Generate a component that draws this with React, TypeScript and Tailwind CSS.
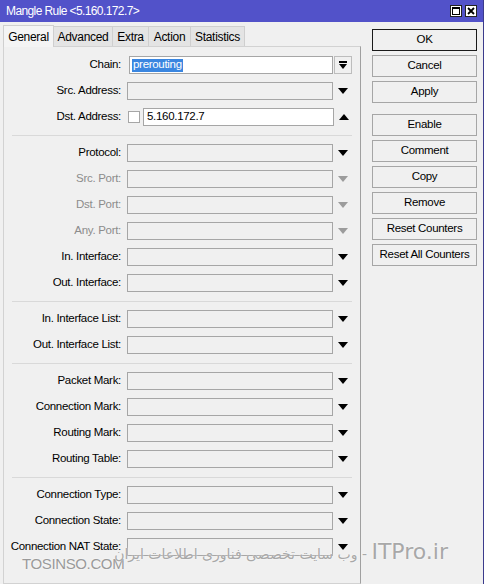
import React from "react";

type Row = { label: string; disabled?: boolean };

const sections: Row[][] = [
  [{ label: "Protocol:" }, { label: "Src. Port:", disabled: true }, { label: "Dst. Port:", disabled: true }, { label: "Any. Port:", disabled: true }, { label: "In. Interface:" }, { label: "Out. Interface:" }],
  [{ label: "In. Interface List:" }, { label: "Out. Interface List:" }],
  [{ label: "Packet Mark:" }, { label: "Connection Mark:" }, { label: "Routing Mark:" }, { label: "Routing Table:" }],
  [{ label: "Connection Type:" }, { label: "Connection State:" }, { label: "Connection NAT State:" }],
];

const buttons1 = ["Cancel", "Apply"];
const buttons2 = ["Enable", "Comment", "Copy", "Remove", "Reset Counters", "Reset All Counters"];

function Down({ gray }: { gray?: boolean }) {
  return (
    <svg width="10" height="6" viewBox="0 0 10 6">
      <path d="M0 0H10L5 6Z" fill={gray ? "#9c9c9c" : "#000"} />
    </svg>
  );
}

function Up() {
  return (
    <svg width="10" height="6" viewBox="0 0 10 6">
      <path d="M0 6H10L5 0Z" fill="#000" />
    </svg>
  );
}

function Label({ text, disabled }: { text: string; disabled?: boolean }) {
  return (
    <div className={`w-[117px] shrink-0 flex justify-end whitespace-nowrap ${disabled ? "text-[#8c8c8c]" : "text-black"}`}>
      {text}
    </div>
  );
}

function Field({ label, disabled }: Row) {
  return (
    <div className="h-[26px] flex items-center">
      <Label text={label} disabled={disabled} />
      <div className="ml-[6px] w-[206px] h-[18px] border border-[#a6a6a6] bg-[#f0f0f0]" />
      <div className="w-[20px] flex justify-center">
        <Down gray={disabled} />
      </div>
    </div>
  );
}

function Sep() {
  return <div className="h-[10px] flex items-center mx-2"><div className="h-px w-full bg-[#d9d9d9]" /></div>;
}

function Btn({ text, focus }: { text: string; focus?: boolean }) {
  return (
    <div className={`h-[22px] flex items-center justify-center bg-[#f0f0f0] border ${focus ? "border-[#1a1a1a]" : "border-[#a6a6a6]"}`}>
      {text}
    </div>
  );
}

export default function App() {
  return (
    <div className="w-[486px] h-[584px] bg-white overflow-hidden relative text-[11.5px] tracking-[-0.3px] leading-none text-black" style={{ fontFamily: '"Liberation Sans", Arial, sans-serif' }}>
      <div className="w-[484px] h-full bg-[#f0f0f0] border-r border-[#3b3b8c] flex flex-col">
        {/* title bar */}
        <div className="h-[22px] bg-[#5252c9] flex items-center pl-[6px] pr-[6px] text-white text-[12px] tracking-[-0.6px]">
          <span>Mangle Rule &lt;5.160.172.7&gt;</span>
          <div className="ml-auto flex gap-[3px]">
            <div className="w-[12px] h-[12px] bg-white border border-[#222] flex items-center justify-center">
              <div className="w-[8px] h-[8px] border border-black border-t-2" />
            </div>
            <div className="w-[12px] h-[12px] bg-white border border-[#222] flex items-center justify-center">
              <svg width="8" height="8" viewBox="0 0 8 8"><path d="M1 1L7 7M7 1L1 7" stroke="#000" strokeWidth="1.8" /></svg>
            </div>
          </div>
        </div>

        <div className="flex flex-1">
          {/* left: tabs + panel */}
          <div className="pl-[3px] pt-[2px] flex flex-col w-[361px]">
            <div className="h-[22px] flex items-end text-[12px]">
              <div className="h-[22px] w-[51px] flex items-center justify-center bg-[#f4f4f4] border border-b-0 border-[#cfcfcf] relative top-px">General</div>
              {["Advanced", "Extra", "Action", "Statistics"].map((t, i) => (
                <div key={t} className={`h-[20px] flex items-center justify-center bg-[#e4e4e4] border border-b-0 border-l-0 border-[#cfcfcf] ${["w-[59px]", "w-[36px]", "w-[42px]", "w-[54px]"][i]}`}>
                  {t}
                </div>
              ))}
            </div>
            <div className="flex-1 border border-[#d2d2d2] border-r-[#a0a0a0] pt-[5px]">
              <div className="h-[26px] flex items-center">
                <Label text="Chain:" />
                <div className="ml-[8px] w-[204px] h-[18px] border border-[#a6a6a6] bg-white flex items-center pl-[2px]">
                  <span className="bg-[#3a86e0] text-white h-[13px] flex items-center px-px">prerouting</span>
                </div>
                <div className="ml-px w-[18px] h-[18px] border border-[#bdbdbd] flex flex-col items-center justify-center gap-[1px]">
                  <div className="w-[8px] h-[2px] bg-black" />
                  <svg width="8" height="5" viewBox="0 0 8 5"><path d="M0 0H8L4 5Z" fill="#000" /></svg>
                </div>
              </div>
              <Field label="Src. Address:" />
              <div className="h-[26px] flex items-center">
                <Label text="Dst. Address:" />
                <div className="ml-[7px] w-[12px] h-[12px] border border-[#a6a6a6] bg-white" />
                <div className="ml-[3px] w-[191px] h-[18px] border border-[#a6a6a6] bg-white flex items-center pl-[3px]">5.160.172.7</div>
                <div className="w-[20px] flex justify-center"><Up /></div>
              </div>
              {sections.map((sec, i) => (
                <React.Fragment key={i}>
                  <Sep />
                  {sec.map((r) => <Field key={r.label} {...r} />)}
                </React.Fragment>
              ))}
            </div>
          </div>

          {/* right: buttons */}
          <div className="ml-[11px] w-[105px] pt-[7px] flex flex-col gap-[4px]">
            <Btn text="OK" focus />
            {buttons1.map((b) => <Btn key={b} text={b} />)}
            <div className="h-[3px]" />
            {buttons2.map((b) => <Btn key={b} text={b} />)}
          </div>
        </div>
      </div>

      {/* watermark */}
      <div className="absolute left-[22px] top-[556px] text-[15px] text-[#9a9a9a] tracking-tight" style={{ textShadow: "0 0 2px #fff" }}>TOSINSO.COM</div>
      <div dir="rtl" className="absolute left-[120px] top-[541px] w-[328px] text-[#a8a8a8] whitespace-nowrap tracking-normal" style={{ fontFamily: '"DejaVu Sans", sans-serif', textShadow: "0 0 2px #fff" }}>
        <span className="text-[22px]">ITPro.ir</span>
        <span className="text-[14px]"> - وب سایت تخصصی فناوری اطلاعات ایران</span>
      </div>
    </div>
  );
}
